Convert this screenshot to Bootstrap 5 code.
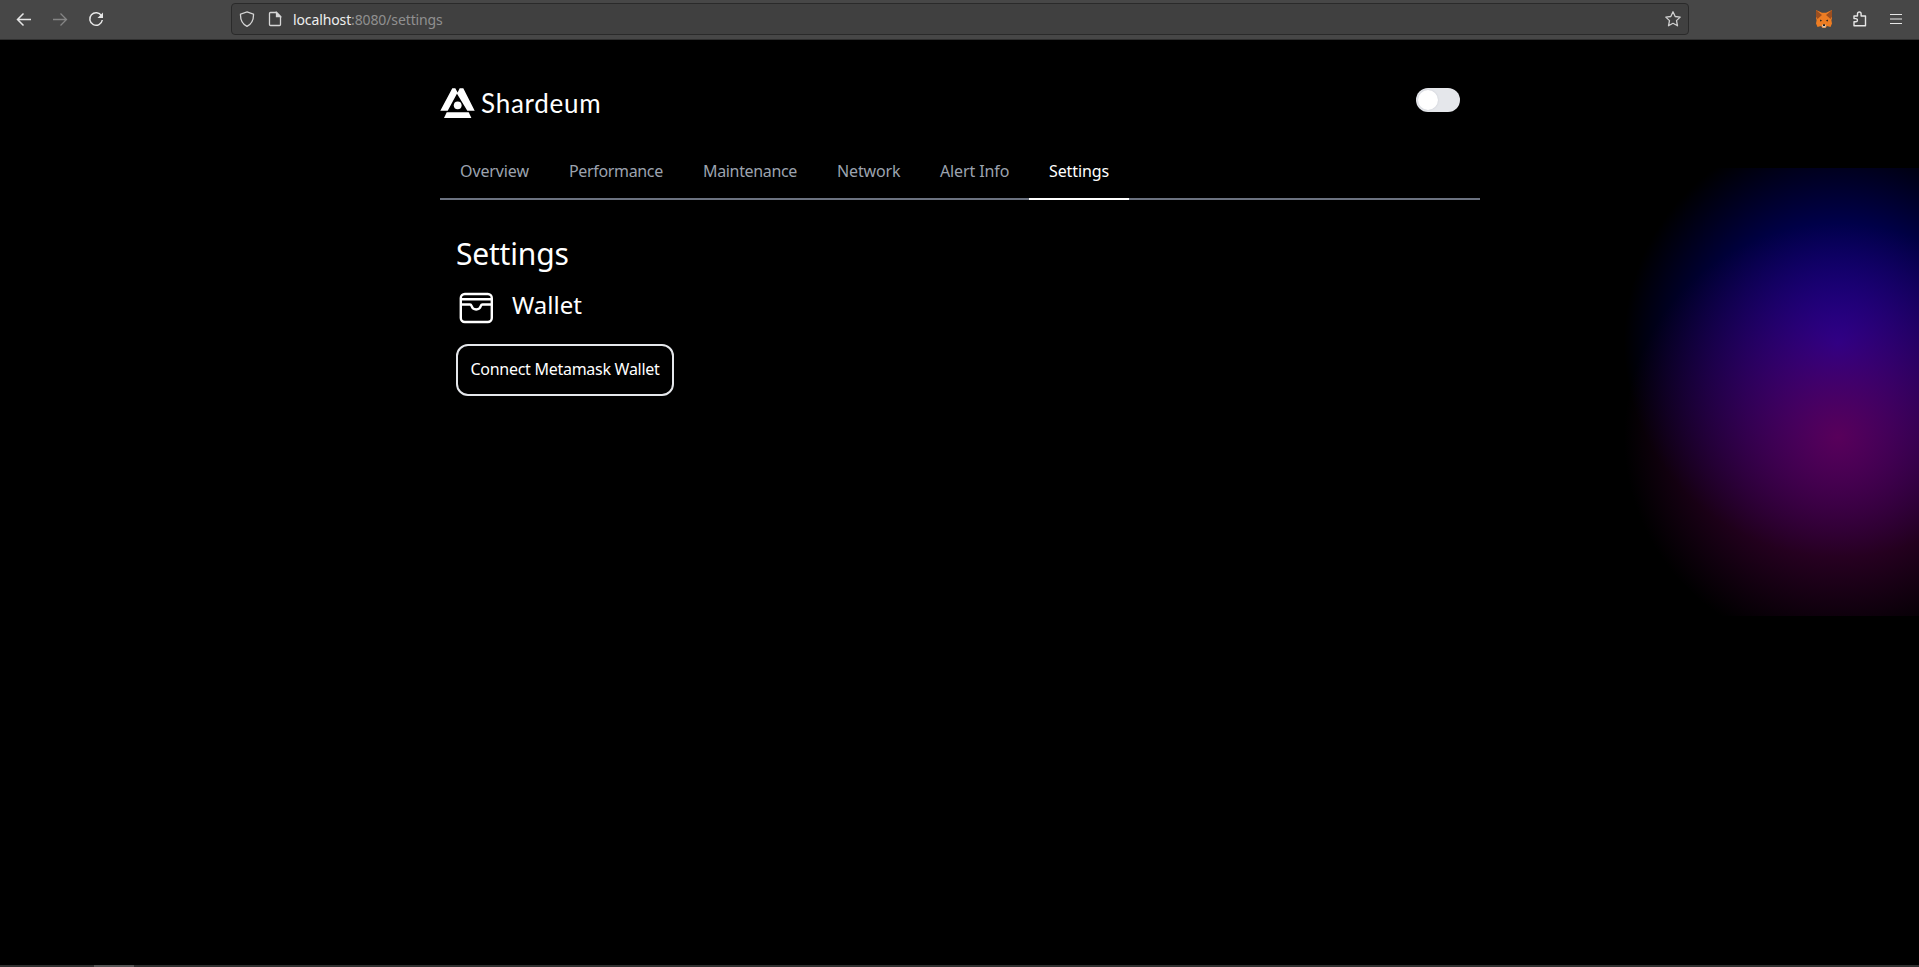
<!DOCTYPE html>
<html lang="en">
<head>
<meta charset="utf-8">
<title>Settings</title>
<link href="https://cdn.jsdelivr.net/npm/bootstrap@5.3.0/dist/css/bootstrap.min.css" rel="stylesheet">
<style>
body{background:#000;color:#fff;font-family:"Noto Sans",sans-serif;font-size:16px;line-height:24px;overflow:hidden}
svg{display:block;flex:none}
.toolbar{height:40px;background:#474747;border-bottom:1px solid #303030;color:#e6e6e6;padding:0 15px 1px 14px}
.toolbar .tools{gap:16px}
.urlbar{width:1458px;height:32px;background:#404040;border:1px solid #2a2a2a;border-radius:4px;margin-left:125px;padding:0 7px;font-size:14px;color:#909090}
.urlbar .host{color:#eee}
.page-icon{margin-left:12px}
.url-text{margin:1px 0 0 10px;letter-spacing:-.12px}
.page{height:925px}
.page-body{width:1040px;margin-left:440px}
.brand-row{padding:46px 20px 0 0}
.wordmark{font-family:Lato,sans-serif;font-size:26px;line-height:30px;margin:2px 0 0 6px;letter-spacing:.75px}
.switch-track{width:44px;height:24px;border-radius:12px;background:#e5e7eb;padding:2px;margin-top:2px}
.switch-knob{width:20px;height:20px;border-radius:50%;background:#fff;box-shadow:0 0 2px #c4c7cf}
.tabs{border-bottom:2px solid #6b7280;margin-top:24px}
.tabs a{color:#9ca3af;text-decoration:none;padding:16px 0 15px 20px;margin-bottom:-2px;border-bottom:2px solid transparent;white-space:nowrap;height:57px;letter-spacing:-.12px}
.tabs a.active{color:#fff;border-color:#fff}
.tabs a:nth-child(1){width:109px}.tabs a:nth-child(2),.tabs a:nth-child(3){width:134px;letter-spacing:-.34px}
.tabs a:nth-child(4){width:103px}.tabs a:nth-child(5){width:109px}.tabs a:nth-child(6){width:100px}
.content{padding:36px 16px}
.title{font-size:30px;line-height:36px;margin:0;letter-spacing:-.2px}
.subtitle{font-size:24px;line-height:32px;margin:1px 0 0 16px}
.connect{border:2px solid #e5e7eb;border-radius:12px;width:218px;height:52px;color:#fff;background:#000;padding:0 0 2px;margin-top:16px;white-space:nowrap;letter-spacing:-.27px}
.glow{top:168px;right:0;width:306px;height:448px;background:radial-gradient(circle 214px at 225px 269px,rgba(105,0,90,.84),rgba(105,0,90,0)),radial-gradient(circle 214px at 225px 175px,#0000a8,rgba(0,0,168,0))}
.dock{height:2px;background:#303030;padding-left:94px}
.dock div{width:40px;height:2px;background:#555}
</style>
</head>
<body>
<header class="toolbar d-flex align-items-center">
<svg width="20" height="20" viewBox="0 0 20 20" fill="none" stroke="currentColor" stroke-width="1.5"><path d="M17 10.500H3.500M9.500 4.500l-6 6 6 6"/></svg>
<svg class="ms-3" width="20" height="20" viewBox="0 0 20 20" fill="none" stroke="#858585" stroke-width="1.3"><path d="M3 10.500h13.500M10.500 4.500l6 6-6 6"/></svg>
<svg class="ms-3" width="20" height="20" viewBox="0 0 20 20" fill="none" stroke="currentColor" stroke-width="1.5"><path d="M15.500 6.800A6.300 6.300 0 1 0 16.300 11"/><path d="M17 3.500V9h-5.500z" fill="currentColor" stroke="none"/></svg>
<div class="urlbar d-flex align-items-center">
<svg width="16" height="16" viewBox="0 0 16 16" fill="none" stroke="#d6d6d6" stroke-width="1.3"><path d="M8 .9 14.500 3.200C14.700 9 12.500 13 8 15.300 3.500 13 1.300 9 1.500 3.200z"/></svg>
<svg class="page-icon" width="16" height="16" viewBox="0 0 16 16" fill="none" stroke="#d6d6d6" stroke-width="1.3"><path d="M3.500 1.500h6l4 4v8a1 1 0 0 1-1 1h-9a1 1 0 0 1-1-1v-11a1 1 0 0 1 1-1z"/><path d="M9.500 1.500v4h4z" fill="#d6d6d6"/></svg>
<span class="url-text"><span class="host">localhost</span>:8080/settings</span>
<svg class="ms-auto" width="16" height="16" viewBox="0 0 16 16" fill="none" stroke="#d0d0d0" stroke-width="1.3" stroke-linejoin="round"><path d="m8 .8 2.200 4.700 5 .6-3.700 3.500 1 5.200L8 12.300l-4.500 2.500 1-5.200L.8 6.100l5-.6z"/></svg>
</div>
<div class="tools d-flex ms-auto align-items-center">
<svg width="16" height="18" viewBox="1 1 16 16" preserveAspectRatio="none"><path d="M1 1 7 3.500h4L17 1v7l-.6 2L17 13l-1.500 3-3.500-.7L10.500 17h-3L6 15.300 2.500 16 1 13l.6-3L1 8z" fill="#ed7d23"/><path d="m1 1 6 4.500L2.500 9 1 7zM17 1l-6 4.500L15.500 9 17 7z" fill="#9c4f20"/><path d="M7 14h4l-.5 2.500h-3z" fill="#d8c8b8"/><path d="M8 13.700h2v1.600H8zM5 9.500l2.200 1-2 .8zM13 9.500l-2.200 1 2 .8z" fill="#222"/></svg>
<svg class="ms-1" width="16" height="16" viewBox="0 0 16 16" fill="none" stroke="currentColor" stroke-width="1.4" stroke-linejoin="round"><path d="M2 5h3.500V2.800a1.800 1.800 0 0 1 3.600 0V5h4.400v9.800H2v-4h1.800a1.600 1.600 0 0 0 0-3.200H2z"/></svg>
<svg class="ms-1" width="16" height="16" viewBox="0 0 16 16" stroke="currentColor" stroke-width="1.2"><path d="M2 3.500h12M2 8h12M2 12.500h12"/></svg>
</div>
</header>
<main class="page">
<div class="page-body">
<div class="brand-row d-flex justify-content-between">
<div class="d-flex">
<svg width="35" height="33" viewBox="0 0 35 33" fill="#fff"><path d="M12.300 2.300h3L17.600 6.500 7.700 24.800H.3zM19.700 2.300h3.600l11.400 22.500h-7.400L17 7.800z"/><circle cx="17.700" cy="19.300" r="3.900"/><path d="M6.700 26.200h22l2.700 5.800H4z"/></svg>
<span class="wordmark">Shardeum</span>
</div>
<div class="switch-track"><div class="switch-knob"></div></div>
</div>
<nav class="tabs d-flex"><a href="#">Overview</a><a href="#">Performance</a><a href="#">Maintenance</a><a href="#">Network</a><a href="#">Alert Info</a><a class="active" href="#">Settings</a></nav>
<section class="content">
<h1 class="title fw-normal">Settings</h1>
<div class="d-flex mt-3"><svg width="40" height="40" viewBox="0 0 40 40" fill="none" stroke="#fff" stroke-width="2.4"><rect x="4.800" y="6" width="31" height="28" rx="4"/><path d="M4.800 11.200h31M4.800 16.500h9.200c1 0 1.300.7 1.600 1.500 1.300 4.600 7.800 4.600 9.200 0 .3-.8.6-1.500 1.600-1.500h9.400"/></svg><h2 class="subtitle fw-normal">Wallet</h2></div>
<button class="connect">Connect Metamask Wallet</button>
</section>
</div>
</main>
<footer class="dock"><div></div></footer>
<div class="glow position-absolute"></div>
<script src="https://cdn.jsdelivr.net/npm/bootstrap@5.3.0/dist/js/bootstrap.bundle.min.js"></script>
</body>
</html>
